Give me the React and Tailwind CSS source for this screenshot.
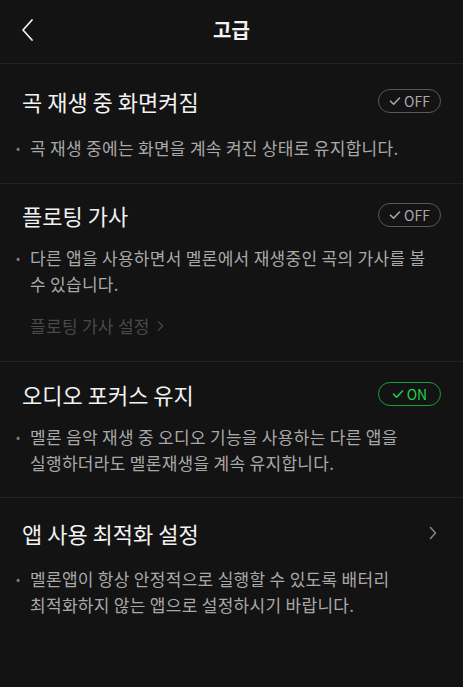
import React from 'react';

const FONT = "font-['Noto_Sans_CJK_KR','Noto_Sans',sans-serif]";

const CheckIcon = ({ className }) => (
  <svg viewBox="0 0 12 12" className={className} fill="none" stroke="currentColor" strokeWidth="1.6" strokeLinecap="round" strokeLinejoin="round">
    <path d="M1.5 6.2 L4.6 9.2 L10.5 3" />
  </svg>
);

const Toggle = ({ on }) => (
  <div
    className={`flex items-center justify-center gap-[3px] w-[63px] h-[24px] rounded-full border ${
      on ? 'border-[#1a9e35] text-[#1fd245]' : 'border-[#5a5a5a] text-[#a8a8a8]'
    }`}
  >
    <CheckIcon className="w-[12px] h-[12px]" />
    <span className="text-[14px] leading-none">{on ? 'ON' : 'OFF'}</span>
  </div>
);

const Bullet = ({ children, className = '' }) => (
  <div className={`flex pl-[16px] pr-[16px] ${className}`}>
    <span className="w-[14px] shrink-0 text-[#7a7a7a] text-[12px] leading-[26px]">•</span>
    <p className="text-[17px] leading-[26px] tracking-[0.3px] text-[#a9a9a9]">{children}</p>
  </div>
);

export default function App() {
  return (
    <div className={`w-[463px] h-[687px] bg-[#131313] ${FONT} overflow-hidden`}>
      {/* Header */}
      <div className="relative h-[64px] flex items-center justify-center border-b border-[#222]">
        <button className="absolute left-[20px] top-[18px] text-[#eee]">
          <svg viewBox="0 0 14 24" className="w-[14px] h-[24px]" fill="none" stroke="currentColor" strokeWidth="1.8" strokeLinecap="round" strokeLinejoin="round">
            <path d="M12 2 L3 12 L12 22" />
          </svg>
        </button>
        <h1 className="text-[20px] font-bold text-[#f2f2f2] leading-none -mt-[4px]">고급</h1>
      </div>

      {/* 곡 재생 중 화면켜짐 */}
      <section className="border-b border-[#222] pt-[22px] pb-[22px]">
        <div className="flex items-center justify-between pl-[22px] pr-[22px] h-[30px]">
          <h2 className="text-[22px] leading-[30px] text-[#f2f2f2]">곡 재생 중 화면켜짐</h2>
          <Toggle />
        </div>
        <Bullet className="mt-[19px]">곡 재생 중에는 화면을 계속 켜진 상태로 유지합니다.</Bullet>
      </section>

      {/* 플로팅 가사 */}
      <section className="border-b border-[#222] pt-[16px] pb-[22px]">
        <div className="flex items-center justify-between pl-[22px] pr-[22px] h-[30px]">
          <h2 className="text-[22px] leading-[30px] text-[#f2f2f2]">플로팅 가사</h2>
          <Toggle />
        </div>
        <Bullet className="mt-[15px]">
          다른 앱을 사용하면서 멜론에서 재생중인 곡의 가사를 볼
          <br />
          수 있습니다.
        </Bullet>
        <div className="mt-[16px] pl-[30px] flex items-center gap-[7px] text-[#4a4a4a]">
          <span className="text-[17px] leading-[26px] tracking-[0.3px]">플로팅 가사 설정</span>
          <svg viewBox="0 0 8 12" className="w-[7px] h-[12px]" fill="none" stroke="currentColor" strokeWidth="1.4" strokeLinecap="round" strokeLinejoin="round">
            <path d="M1.5 1 L6.5 6 L1.5 11" />
          </svg>
        </div>
      </section>

      {/* 오디오 포커스 유지 */}
      <section className="border-b border-[#222] pt-[17px] pb-[21px]">
        <div className="flex items-center justify-between pl-[22px] pr-[22px] h-[30px]">
          <h2 className="text-[22px] leading-[30px] text-[#f2f2f2]">오디오 포커스 유지</h2>
          <Toggle on />
        </div>
        <Bullet className="mt-[15px]">
          멜론 음악 재생 중 오디오 기능을 사용하는 다른 앱을
          <br />
          실행하더라도 멜론재생을 계속 유지합니다.
        </Bullet>
      </section>

      {/* 앱 사용 최적화 설정 */}
      <section className="pt-[20px] pb-[20px]">
        <div className="flex items-center justify-between pl-[22px] pr-[26px] h-[30px]">
          <h2 className="text-[22px] leading-[30px] text-[#f2f2f2]">앱 사용 최적화 설정</h2>
          <svg viewBox="0 0 8 14" className="w-[8px] h-[14px] text-[#8a8a8a]" fill="none" stroke="currentColor" strokeWidth="1.4" strokeLinecap="round" strokeLinejoin="round">
            <path d="M1.5 1.5 L6.5 7 L1.5 12.5" />
          </svg>
        </div>
        <Bullet className="mt-[18px]">
          멜론앱이 항상 안정적으로 실행할 수 있도록 배터리
          <br />
          최적화하지 않는 앱으로 설정하시기 바랍니다.
        </Bullet>
      </section>
    </div>
  );
}
